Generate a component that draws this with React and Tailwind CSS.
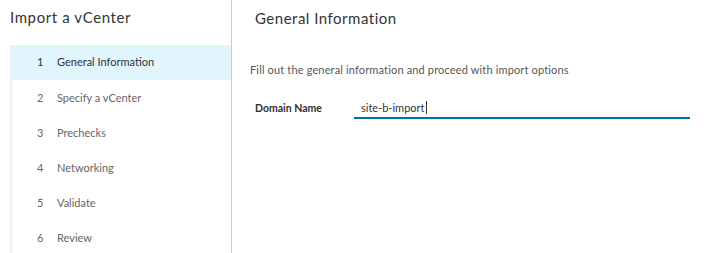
import React from 'react';

const steps = [
  'General Information',
  'Specify a vCenter',
  'Prechecks',
  'Networking',
  'Validate',
  'Review',
];

function App() {
  return (
    <div
      className="flex h-[253px] w-[707px] overflow-hidden bg-white text-[#565656]"
      style={{ fontFamily: 'Lato, "Open Sans", sans-serif' }}
    >
      {/* Sidebar */}
      <aside className="w-[232px] shrink-0 border-r border-[#cccccc] pl-[10px]">
        <h1 className="pt-[7px] text-[15px] leading-[20px] tracking-[0.6px] text-[#333333]">Import a vCenter</h1>
        <ol className="mt-[18px] border-l-[3px] border-[#eef3f6]">
          {steps.map((label, i) => (
            <li
              key={label}
              className={`flex h-[35.2px] items-center text-[11px] ${
                i === 0 ? 'bg-[#e1f5fd] text-[#333333]' : 'text-[#666666]'
              }`}
            >
              <span className="w-[44px] pl-[24px]">{i + 1}</span>
              <span>{label}</span>
            </li>
          ))}
        </ol>
      </aside>

      {/* Main */}
      <main className="flex-1 pl-[18px] pr-[17px]">
        <h2 className="pl-[5px] pt-[8px] text-[15px] leading-[20px] tracking-[0.5px] text-[#333333]">
          General Information
        </h2>
        <p className="mt-[34px] text-[11px] tracking-[0.15px] text-[#565656]">
          Fill out the general information and proceed with import options
        </p>
        <div className="mt-[17px] flex items-end pl-[5px]">
          <label className="w-[99px] pb-[3px] text-[10.5px] leading-[16px] font-bold text-[#313131]">Domain Name</label>
          <div className="flex h-[23px] flex-1 items-end border-b-2 border-[#0072a3] pb-[1px] pl-[7px] text-[11px] leading-[16px] text-[#333333]">
            site-b-import<span className="mb-[2px] ml-[1px] h-[13px] w-px bg-[#333333]" />
          </div>
        </div>
      </main>
    </div>
  );
}

export default App;
